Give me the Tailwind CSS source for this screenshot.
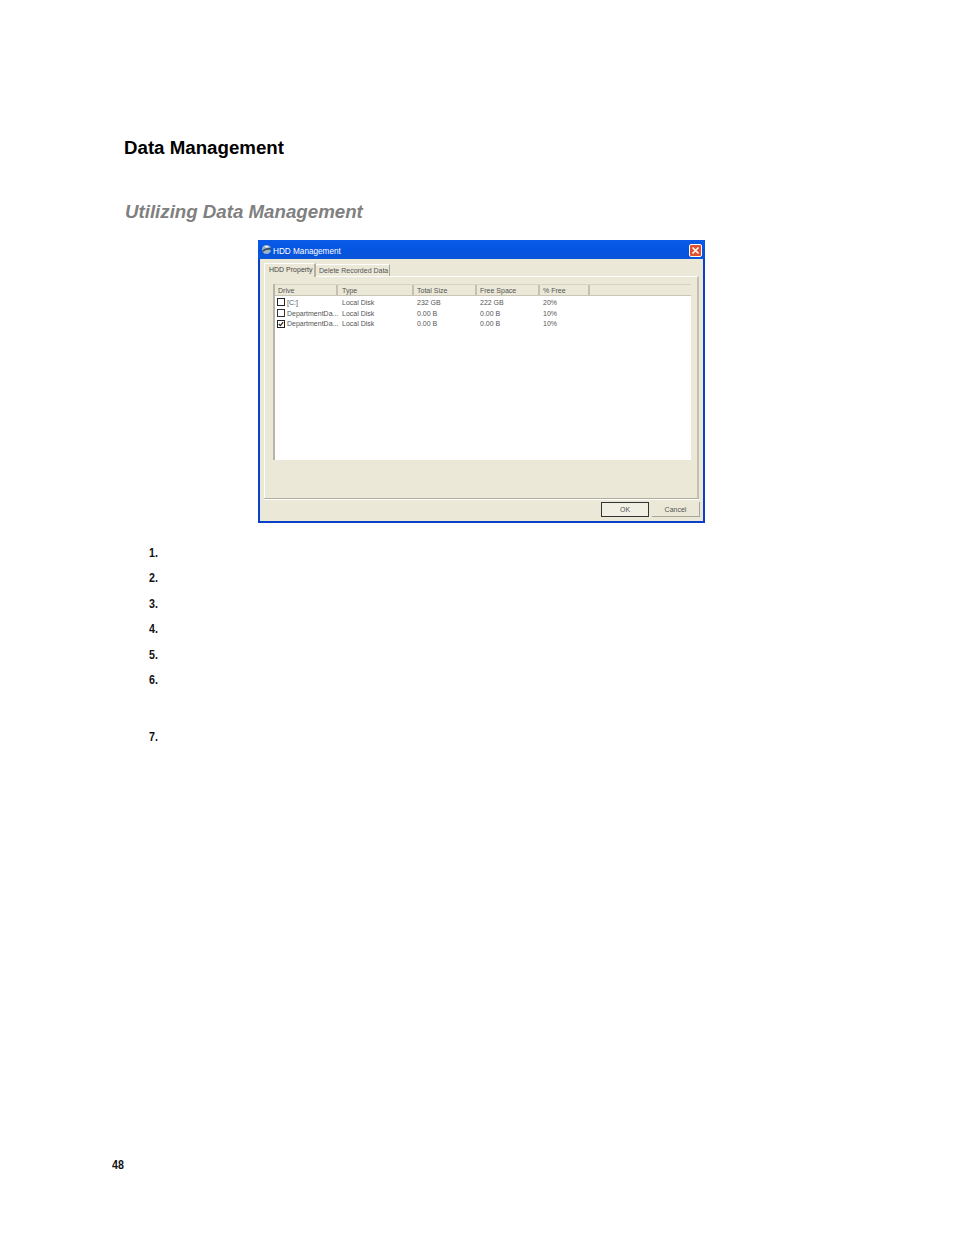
<!DOCTYPE html>
<html>
<head>
<meta charset="utf-8">
<script src="https://cdn.jsdelivr.net/npm/@tailwindcss/browser@4"></script>
</head>
<body class="bg-white font-['Liberation_Sans',sans-serif]">
<div class="w-[954px] h-[1235px] flex flex-col overflow-hidden">
  <h1 class="mt-[136px] ml-[124px] h-[23px] text-[18.7px] leading-[23px] font-bold text-black whitespace-nowrap">Data Management</h1>
  <h2 class="mt-[41px] ml-[125px] h-[23px] text-[18.7px] leading-[23px] font-bold italic text-[#808080] whitespace-nowrap">Utilizing Data Management</h2>

  <div class="mt-[17px] ml-[258px] w-[447px] h-[283px] flex flex-col bg-[#0a4fd8] border-x-2 border-b-2 border-[#0a3fc8]">
    <div class="h-[19px] -mx-[2px] flex items-center justify-between pl-[3px] pr-[3px] bg-gradient-to-b from-[#0a5ce8] via-[#0554e2] to-[#0a55d8] rounded-t-[2px] text-white">
      <div class="flex items-center gap-[1px]">
        <svg width="11" height="11" viewBox="0 0 11 11"><circle cx="5.5" cy="5.5" r="4.5" fill="#9fb4c8"/><path d="M1 6.5 Q5 3 10 4 L10 6 Q5 5 2 8 Z" fill="#33506e"/><path d="M3 2 L8 2 L6 4 Z" fill="#e8f0f6"/></svg>
        <span class="pt-[5px] text-[8.2px] leading-none whitespace-nowrap">HDD Management</span>
      </div>
      <div class="mt-[1px] w-[13px] h-[13px] rounded-[2px] border border-white bg-[#e0512f] flex items-center justify-center">
        <svg width="9" height="9" viewBox="0 0 9 9"><path d="M1.5 1.5 L7.5 7.5 M7.5 1.5 L1.5 7.5" stroke="#ffffff" stroke-width="1.6"/></svg>
      </div>
    </div>

    <div class="flex-1 bg-[#ebe8d8] flex flex-col text-[7px] leading-none text-[#555]">
      <div class="h-[17px] pt-[4px] pl-[4px] flex items-end">
        <div class="h-[14px] w-[52px] -mb-[1px] z-10 pl-[4px] pt-[2px] bg-[#ebe8d8] border-t border-l border-white border-r-2 border-r-[#b4b1a3] whitespace-nowrap text-[#444]">HDD Property</div>
        <div class="h-[12px] w-[74px] pl-[3px] pt-[2px] border-t border-white border-r border-r-[#a8a59a] whitespace-nowrap">Delete Recorded Data</div>
      </div>
      <div class="h-[222px] mx-[4px] border-t border-l border-white border-r-2 border-r-[#c4c1b3] pt-[7px] pl-[8px] pr-[6px] flex flex-col">
        <div class="w-[418px] h-[176px] flex flex-col bg-white border-l-2 border-[#b8b5a8]">
          <div class="h-[12px] shrink-0 bg-[#ebe8d8] border-t border-[#d6d3c5] border-b border-b-[#c9c6b8] grid grid-cols-[61px_76px_63px_63px_50px_1fr] items-center whitespace-nowrap">
            <span class="pl-[3px] pt-[1px] h-full flex items-center">Drive</span>
            <span class="pl-[4px] pt-[1px] border-l-2 border-[#c4c1b3] h-full flex items-center">Type</span>
            <span class="pl-[3px] pt-[1px] border-l-2 border-[#c4c1b3] h-full flex items-center">Total Size</span>
            <span class="pl-[3px] pt-[1px] border-l-2 border-[#c4c1b3] h-full flex items-center">Free Space</span>
            <span class="pl-[3px] pt-[1px] border-l-2 border-[#c4c1b3] h-full flex items-center">% Free</span>
            <span class="border-l-2 border-[#c4c1b3] h-full"></span>
          </div>
          <div class="pt-[1px] flex flex-col whitespace-nowrap">
            <div class="h-[10.8px] grid grid-cols-[61px_76px_63px_63px_50px_1fr] items-center">
              <span class="pl-[2px] flex items-center gap-[2px]"><span class="w-[8px] h-[8px] border-[1.5px] border-[#222] bg-white"></span>[C:]</span>
              <span class="pl-[6px]">Local Disk</span><span class="pl-[5px]">232 GB</span><span class="pl-[5px]">222 GB</span><span class="pl-[5px]">20%</span><span></span>
            </div>
            <div class="h-[10.8px] grid grid-cols-[61px_76px_63px_63px_50px_1fr] items-center">
              <span class="pl-[2px] flex items-center gap-[2px]"><span class="w-[8px] h-[8px] shrink-0 border-[1.5px] border-[#333] bg-white"></span>DepartmentDa...</span>
              <span class="pl-[6px]">Local Disk</span><span class="pl-[5px]">0.00 B</span><span class="pl-[5px]">0.00 B</span><span class="pl-[5px]">10%</span><span></span>
            </div>
            <div class="h-[10.8px] grid grid-cols-[61px_76px_63px_63px_50px_1fr] items-center">
              <span class="pl-[2px] flex items-center gap-[2px]"><span class="w-[8px] h-[8px] shrink-0 border-[1.5px] border-[#222] bg-white flex items-center justify-center"><svg width="6" height="6" viewBox="0 0 6 6"><path d="M0.8 3 L2.4 4.6 L5.2 1.2" fill="none" stroke="#222" stroke-width="1.2"/></svg></span>DepartmentDa...</span>
              <span class="pl-[6px]">Local Disk</span><span class="pl-[5px]">0.00 B</span><span class="pl-[5px]">0.00 B</span><span class="pl-[5px]">10%</span><span></span>
            </div>
          </div>
        </div>
      </div>
      <div class="mx-[4px] h-[2px] bg-[#b0ada0] border-b border-b-white"></div>
      <div class="flex justify-end gap-[3px] pt-[2px] pr-[3px]">
        <div class="w-[48px] h-[15px] bg-[#f1efe4] border border-[#333] flex items-center justify-center">OK</div>
        <div class="w-[48px] h-[15px] bg-[#ebe8d8] border-r border-b border-[#a8a59a] flex items-center justify-center">Cancel</div>
      </div>
    </div>
  </div>

  <ol class="mt-[23px] ml-[149px] flex flex-col text-[13px] leading-[14px] font-bold text-[#111]">
    <li class="h-[25.4px] origin-left scale-x-[0.82]">1.</li>
    <li class="h-[25.4px] origin-left scale-x-[0.82]">2.</li>
    <li class="h-[25.4px] origin-left scale-x-[0.82]">3.</li>
    <li class="h-[25.4px] origin-left scale-x-[0.82]">4.</li>
    <li class="h-[25.4px] origin-left scale-x-[0.82]">5.</li>
    <li class="h-[57px] origin-left scale-x-[0.82]">6.</li>
    <li class="h-[14px] origin-left scale-x-[0.82]">7.</li>
  </ol>

  <div class="mt-auto mb-[63px] ml-[112px] text-[13px] leading-[14px] font-bold text-[#111] origin-left scale-x-[0.82]">48</div>
</div>
</body>
</html>
